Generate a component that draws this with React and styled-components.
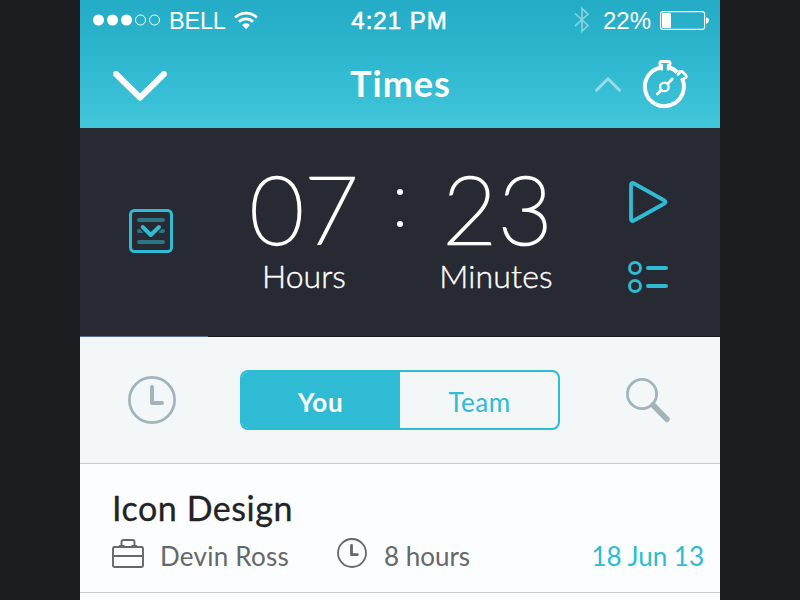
import React from "react";
import styled, { createGlobalStyle } from "styled-components";

const CYAN = "#2ebbd3";
const SLATE = "#a3b4bb";
const GREY = "#666769";

const GlobalStyle = createGlobalStyle`
  * { box-sizing: border-box; }
  body { margin: 0; background: #1c1d21; }
  svg { display: block; flex: none; overflow: visible; }
`;

const Stage = styled.div`
  width: 800px;
  height: 600px;
  overflow: hidden;
  display: flex;
  justify-content: center;
  background: #1c1d21;
  font-family: Lato, "Open Sans", sans-serif;
`;

const Phone = styled.main`
  width: 640px;
  height: 600px;
  display: flex;
  flex-direction: column;
  background: #fcfdff;
`;

const Header = styled.header`
  height: 128px;
  flex: none;
  background: linear-gradient(#24abc6, #2fb8d0 50%, #42c6da);
  color: #fff;
`;

const StatusBar = styled.div`
  height: 40px;
  display: grid;
  grid-template-columns: 1fr auto 1fr;
  align-items: center;
  padding: 0 11px 0 13px;
  font-family: "Liberation Sans", Arial, sans-serif;
`;

const StatusGroup = styled.div`
  display: flex;
  align-items: center;
  justify-content: ${(p) => (p.$end ? "flex-end" : "flex-start")};
`;

/* One line of text with a fixed box, so type metrics never move its neighbours. */
const Label = styled.span`
  display: block;
  flex: none;
  white-space: nowrap;
  width: ${(p) => (p.$width ? `${p.$width}px` : "auto")};
  font-size: ${(p) => p.$size}px;
  font-weight: ${(p) => p.$weight || 400};
  line-height: ${(p) => p.$line || 30}px;
  letter-spacing: ${(p) => p.$track || 0}px;
  color: ${(p) => p.$color || "inherit"};
  margin: ${(p) => p.$margin || "0"};
  -webkit-text-stroke: ${(p) => p.$stroke || 0}px currentColor;
`;

const NavBar = styled.div`
  height: 88px;
  display: grid;
  grid-template-columns: 1fr auto 1fr;
  align-items: start;
  padding: 20px 30px 0 33px;
`;

const NavActions = styled.div`
  display: flex;
  justify-content: flex-end;
  gap: 22px;
`;

const Timer = styled.section`
  height: 208px;
  flex: none;
  display: grid;
  grid-template-columns: 142px 160px 36px 160px 140px;
  background: #272a32;
  color: #fff;
`;

const TimerSide = styled.div`
  display: flex;
  flex-direction: column;
  align-items: center;
  gap: 38px;
  padding-top: ${(p) => p.$top}px;
`;

const TimeUnit = styled.div`
  display: flex;
  flex-direction: column;
  align-items: center;
  padding-top: 32px;
`;

const Colon = styled.div`
  display: flex;
  flex-direction: column;
  align-items: center;
  gap: 26px;
  padding-top: 61px;
  &::before, &::after {
    content: "";
    width: 6px;
    height: 6px;
    border-radius: 50%;
    background: #fff;
  }
`;

const Progress = styled.div`
  height: 1px;
  flex: none;
  background: #17191d;
  &::before {
    content: "";
    display: block;
    width: 128px;
    height: 1px;
    background: #5d6c93;
  }
`;

const FilterBar = styled.section`
  height: 127px;
  flex: none;
  display: flex;
  align-items: center;
  padding: 0 48px;
  border-bottom: 1px solid #c8cacd;
  background: #f3f7f8;
`;

const Segmented = styled.div`
  width: 320px;
  height: 60px;
  flex: none;
  margin: 0 66px 0 64px;
  display: flex;
  border: 2px solid ${CYAN};
  border-radius: 8px;
  overflow: hidden;
`;

const Segment = styled.button`
  flex: 1;
  display: flex;
  justify-content: center;
  border: 0;
  padding: 15px 0 0;
  font-family: inherit;
  background: ${(p) => (p.$active ? CYAN : "transparent")};
  color: ${(p) => (p.$active ? "#fff" : CYAN)};
`;

const Entry = styled.article`
  height: 129px;
  flex: none;
  padding: 24px 16px 0 32px;
  border-bottom: 1px solid #c8cacd;
`;

const EntryMeta = styled.div`
  display: flex;
  align-items: flex-start;
  height: 40px;
  color: ${GREY};
`;

const IconSlot = styled.span`
  flex: none;
  width: ${(p) => p.$width}px;
  padding-top: ${(p) => p.$top || 0}px;
`;

const Push = styled.span`
  margin-left: auto;
`;

const Signal = () => (
  <svg width="68" height="12" viewBox="0 0 68 12">
    {[5.5, 19.5, 33.5].map((x) => <circle key={x} cx={x} cy="6" r="5.5" fill="#fff" />)}
    {[47.5, 61.5].map((x) => <circle key={x} cx={x} cy="6" r="5" fill="none" stroke="#fff" />)}
  </svg>
);

const Wifi = () => (
  <svg width="24" height="19" viewBox="0 0 24 19">
    <g fill="none" stroke="#fff" strokeWidth="2.7">
      <path d="M1.1 6.6a15.4 15.4 0 0 1 21.8 0" />
      <path d="M4.9 10.8a10 10 0 0 1 14.2 0" />
    </g>
    <path d="M8 14a5.7 5.7 0 0 1 8 0l-4 4.3z" fill="#fff" />
  </svg>
);

const Bluetooth = () => (
  <svg width="16" height="26" viewBox="0 0 16 26">
    <path d="M1 6.5 14 18.5 8 24.2V1.5L14 7.3 1 19" fill="none" stroke="#87d1df" strokeWidth="1.7" />
  </svg>
);

const Battery = () => (
  <svg width="49" height="19" viewBox="0 0 49 19">
    <rect x=".6" y=".6" width="44" height="17.8" rx="2.5" fill="none" stroke="#fff" strokeWidth="1.1" />
    <rect x="2" y="2" width="9" height="15" rx="1" fill="#fff" />
    <path d="M46 6.3q3 .8 3 3.2t-3 3.2z" fill="#fff" />
  </svg>
);

const Chevron = () => (
  <svg width="54" height="42" viewBox="0 0 54 42">
    <path d="M3 14 27 37.6 51 14" fill="none" stroke="#fff" strokeWidth="6" strokeLinecap="round" strokeLinejoin="round" />
  </svg>
);

const Caret = () => (
  <svg width="28" height="34" viewBox="0 0 28 34">
    <path d="M2.5 30.3 14 18.7l11.5 11.6" fill="none" stroke="#9adde8" strokeWidth="2.8" strokeLinecap="round" strokeLinejoin="round" />
  </svg>
);

const Stopwatch = () => (
  <svg width="46" height="49" viewBox="0 0 46 49" fill="none" stroke="#fff" strokeLinecap="round" strokeLinejoin="round">
    <g transform="translate(-.8)">
      <path d="M18.2 7.4A19.5 19.5 0 1 0 38.7 18.2" strokeWidth="4" strokeLinecap="butt" />
      <path d="M25 7.2q5.3 1.1 9 5.2" strokeWidth="4" strokeLinecap="butt" />
      <path d="M18.5 9.3V5.5h-1q-1-.1-.9-2t1.7-2h6.9q1.6.2 1.7 2t-.9 2h-1v3.8" strokeWidth="2.8" />
      <path d="m34.7 14.5 2-2-.3-1q1.2-.5 2.3-.2l4.1 4q.8 1 0 2.4l-1.2.3-2.3 2" strokeWidth="2.6" />
      <circle cx="21.2" cy="26.9" r="4.3" strokeWidth="2.3" />
      <path d="m24.4 23.7 4.6-4.6M18 30.1l-3.8 3.8" strokeWidth="2.8" />
    </g>
  </svg>
);

const Collapse = () => (
  <svg width="44" height="44" viewBox="0 0 44 44" fill="none" stroke={CYAN} strokeLinecap="round" strokeLinejoin="round">
    <rect x="1.5" y="1.5" width="41" height="41" rx="4" strokeWidth="3" />
    <path d="M10 11h24M10 22h3M31 22h3M10 33h24" stroke="#2c7583" strokeWidth="4" />
    <path d="m13.5 18 8.3 8 8.2-8" stroke="#272a32" strokeWidth="7" strokeLinecap="butt" />
    <path d="m13.7 18 8.1 8 8.2-8" strokeWidth="4" />
  </svg>
);

const Play = () => (
  <svg width="40" height="42" viewBox="0 0 40 42">
    <path d="M3 4.2q0-3.4 3-1.7l30.4 17q2.2 1.5 0 3L6 39.5q-3 1.7-3-1.7z" fill="none" stroke={CYAN} strokeWidth="3.8" strokeLinejoin="round" />
  </svg>
);

const Tasks = () => (
  <svg width="40" height="32" viewBox="0 0 40 32" fill="none" stroke={CYAN}>
    <circle cx="7" cy="7" r="5.5" strokeWidth="3" />
    <circle cx="7" cy="25" r="5.5" strokeWidth="3" />
    <path d="M20 7h18M20 25h18" strokeWidth="4" strokeLinecap="round" />
  </svg>
);

const Clock = () => (
  <svg width="48" height="48" viewBox="0 0 48 48" fill="none" stroke={SLATE} strokeLinecap="round" strokeLinejoin="round">
    <circle cx="24" cy="24" r="22.6" strokeWidth="2.8" />
    <path d="M24 11v16h10" strokeWidth="4" />
  </svg>
);

const SmallClock = () => (
  <svg width="30" height="30" viewBox="0 0 30 30" fill="none" stroke={GREY} strokeLinecap="round" strokeLinejoin="round">
    <circle cx="15" cy="15" r="14" strokeWidth="1.8" />
    <path d="M14.5 7.5v9.2h5.8" strokeWidth="2.8" />
  </svg>
);

const Search = () => (
  <svg width="44" height="44" viewBox="0 0 44 44" fill="none" stroke={SLATE}>
    <circle cx="16" cy="16" r="14.6" strokeWidth="2.8" />
    <path d="M27 27 41 41.2" strokeWidth="5.6" strokeLinecap="round" />
  </svg>
);

const Briefcase = () => (
  <svg width="32" height="29" viewBox="0 0 32 29" fill="none" stroke={GREY} strokeWidth="1.9">
    <rect x="1" y="8" width="30" height="20" rx="1.5" />
    <path d="M1 17h30M7 7h5.5M19.5 7H25M9.5 7V3q0-2 2-2h9q2 0 2 2v4" />
  </svg>
);

export default function App() {
  return (
    <Stage>
      <GlobalStyle />
      <Phone>
        <Header>
          <StatusBar>
            <StatusGroup>
              <Signal />
              <Label $size={23.5} $track={-0.2} $width={65} $margin="2px 0 0 8px">BELL</Label>
              <Wifi />
            </StatusGroup>
            <Label $size={24} $track={1} $stroke={0.6} $margin="2px 3px 0 0">4:21 PM</Label>
            <StatusGroup $end>
              <Bluetooth />
              <Label $size={24} $width={57} $margin="2px 0 0 13px">22%</Label>
              <Battery />
            </StatusGroup>
          </StatusBar>
          <NavBar>
            <Chevron />
            <Label $size={36} $weight={700} $line={46} $track={1} $margin="0 2px 0 0">Times</Label>
            <NavActions>
              <Caret />
              <Stopwatch />
            </NavActions>
          </NavBar>
        </Header>

        <Timer>
          <TimerSide $top={81}><Collapse /></TimerSide>
          <TimeUnit>
            <Label $size={94} $weight={100} $line={96} $stroke={2.5} $margin="0 0 0 4px">07</Label>
            <Label $size={32} $weight={300} $line={40} $stroke={0.4} $margin="0 0 0 4px">Hours</Label>
          </TimeUnit>
          <Colon />
          <TimeUnit>
            <Label $size={94} $weight={100} $line={96} $stroke={2.5} $track={1}>23</Label>
            <Label $size={32} $weight={300} $line={40} $stroke={0.4} $track={0.2} $margin="0 4px 0 0">Minutes</Label>
          </TimeUnit>
          <TimerSide $top={53}><Play /><Tasks /></TimerSide>
        </Timer>
        <Progress />

        <FilterBar>
          <Clock />
          <Segmented>
            <Segment $active><Label $size={26} $weight={700} $track={0.6} $margin="0 1px 0 0">You</Label></Segment>
            <Segment><Label $size={26} $track={0.5} $margin="0 0 0 1px">Team</Label></Segment>
          </Segmented>
          <Search />
        </FilterBar>

        <Entry>
          <Label $size={34} $line={40} $track={0.55} $color="#222324" $stroke={0.3}>Icon Design</Label>
          <EntryMeta>
            <IconSlot $width={48} $top={11}><Briefcase /></IconSlot>
            <Label $size={26} $width={177} $line={56} $track={0.25}>Devin Ross</Label>
            <IconSlot $width={47} $top={10}><SmallClock /></IconSlot>
            <Label $size={26} $line={56}>8 hours</Label>
            <Push><Label $size={26} $line={56} $color={CYAN}>18 Jun 13</Label></Push>
          </EntryMeta>
        </Entry>
      </Phone>
    </Stage>
  );
}
